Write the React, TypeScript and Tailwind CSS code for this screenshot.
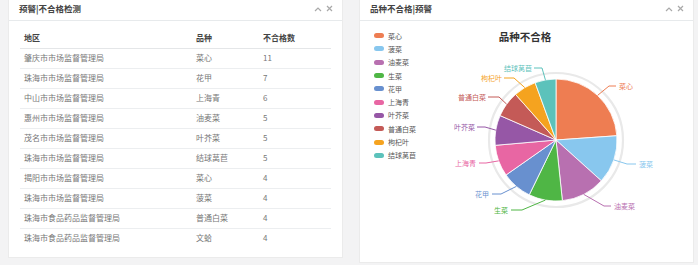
import React from "react";

const FONT = { fontFamily: '"Noto Sans CJK SC", "Noto Sans", sans-serif' };

const rows: [string, string, number][] = [
  ["肇庆市市场监督管理局", "菜心", 11],
  ["珠海市市场监督管理局", "花甲", 7],
  ["中山市市场监督管理局", "上海青", 6],
  ["惠州市市场监督管理局", "油麦菜", 5],
  ["茂名市市场监督管理局", "叶芥菜", 5],
  ["珠海市市场监督管理局", "结球莴苣", 5],
  ["揭阳市市场监督管理局", "菜心", 4],
  ["珠海市市场监督管理局", "菠菜", 4],
  ["珠海市食品药品监督管理局", "普通白菜", 4],
  ["珠海市食品药品监督管理局", "文蛤", 4],
];

type Slice = {
  name: string;
  color: string;
  a0: number;
  a1: number;
  p2: [number, number];
  p3: [number, number];
  tx: number;
  anchor: "start" | "end";
};

const slices: Slice[] = [
  { name: "菜心", color: "#ee7d52", a0: 0, a1: 86, p2: [610, 87], p3: [617, 87], tx: 620, anchor: "start" },
  { name: "菠菜", color: "#88c7ee", a0: 86, a1: 132, p2: [628, 165], p3: [637, 165], tx: 640, anchor: "start" },
  { name: "油麦菜", color: "#b870b0", a0: 132, a1: 174, p2: [605, 207], p3: [612, 207], tx: 615, anchor: "start" },
  { name: "生菜", color: "#4fb645", a0: 174, a1: 206, p2: [523, 211], p3: [512, 211], tx: 509, anchor: "end" },
  { name: "花甲", color: "#6890cf", a0: 206, a1: 235, p2: [502, 195], p3: [493, 195], tx: 490, anchor: "end" },
  { name: "上海青", color: "#e866a3", a0: 235, a1: 265, p2: [487, 164], p3: [480, 164], tx: 477, anchor: "end" },
  { name: "叶芥菜", color: "#9657a6", a0: 265, a1: 293.6, p2: [486, 128], p3: [478, 128], tx: 476, anchor: "end" },
  { name: "普通白菜", color: "#c45a57", a0: 293.6, a1: 318.4, p2: [500, 98], p3: [489, 98], tx: 487, anchor: "end" },
  { name: "枸杞叶", color: "#f5a31f", a0: 318.4, a1: 340, p2: [515, 79], p3: [505, 79], tx: 503, anchor: "end" },
  { name: "结球莴苣", color: "#5cc2bb", a0: 340, a1: 360, p2: [543, 69], p3: [535, 69], tx: 533, anchor: "end" },
];

// svg origin in page coords
const OX = 420;
const OY = 45;
const CX = 557 - OX;
const CY = 141 - OY;
const R = 61;

function pt(a: number, r: number): [number, number] {
  const rad = (a * Math.PI) / 180;
  return [CX + r * Math.sin(rad), CY - r * Math.cos(rad)];
}

function slicePath(a0: number, a1: number) {
  const [x0, y0] = pt(a0, R);
  const [x1, y1] = pt(a1, R);
  const large = a1 - a0 > 180 ? 1 : 0;
  return `M${CX},${CY} L${x0},${y0} A${R},${R} 0 ${large} 1 ${x1},${y1} Z`;
}

function PanelIcons() {
  return (
    <div className="flex items-center gap-[4px]">
      <svg width="8" height="6" viewBox="0 0 8 6">
        <path d="M1 5 L4 2 L7 5" stroke="#a9a9a9" strokeWidth="1.2" fill="none" />
      </svg>
      <svg width="7" height="7" viewBox="0 0 7 7">
        <path d="M1 1 L6 6 M6 1 L1 6" stroke="#a9a9a9" strokeWidth="1.2" fill="none" />
      </svg>
    </div>
  );
}

function PanelHeader({ title }: { title: string }) {
  return (
    <div className="flex h-[21px] items-start justify-between border-b border-[#e7eaec] pl-[10px] pr-[9px] pt-[2px]">
      <span className="text-[8.5px] font-bold leading-[12px] text-[#444]">{title}</span>
      <div className="pt-[3px]">
        <PanelIcons />
      </div>
    </div>
  );
}

export default function App() {
  return (
    <div
      className="flex h-[265px] w-[698px] items-start gap-[16px] bg-[#f3f3f4] pl-[8px]"
      style={FONT}
    >
      {/* Left panel */}
      <div className="h-[258px] w-[335px] border-x border-b border-[#ebebeb] bg-white">
        <PanelHeader title="预警|不合格检测" />
        <div className="px-[11px] pt-[7px]">
          <table className="w-full border-collapse text-[8px]">
            <thead>
              <tr className="h-[20px] border-b border-[#e4e6e8]">
                <th className="w-[172px] pl-[4px] text-left font-bold text-[#444]">地区</th>
                <th className="w-[67px] pl-[4px] text-left font-bold text-[#444]">品种</th>
                <th className="pl-[4px] text-left font-bold text-[#444]">不合格数</th>
              </tr>
            </thead>
            <tbody>
              {rows.map((r, i) => (
                <tr
                  key={i}
                  className={i === 0 ? "h-[20px]" : "h-[20px] border-t border-[#eceef0]"}
                >
                  <td className="pl-[4px] text-[#777]">{r[0]}</td>
                  <td className="pl-[4px] text-[#777]">{r[1]}</td>
                  <td className="pl-[4px] text-[#777]">{r[2]}</td>
                </tr>
              ))}
            </tbody>
          </table>
        </div>
      </div>

      {/* Right panel */}
      <div className="h-[263px] w-[335px] border-x border-b border-[#ebebeb] bg-white">
        <PanelHeader title="品种不合格|预警" />
        <div className="flex h-[241px]">
          <div className="flex w-[61px] flex-col pl-[14px] pt-[8px]">
            {slices.map((s) => (
              <div key={s.name} className="flex h-[13.3px] items-center gap-[4px]">
                <span
                  className="inline-block h-[5px] w-[10px] rounded-[3px]"
                  style={{ backgroundColor: s.color }}
                />
                <span className="whitespace-nowrap text-[7px] leading-[10px] text-[#555]">
                  {s.name}
                </span>
              </div>
            ))}
          </div>
          <div className="flex flex-1 flex-col">
            <div className="mt-[9px] h-[14px] pr-[62px] text-center text-[10.5px] font-bold leading-[14px] text-[#333]">
              品种不合格
            </div>
            <svg width="274" height="218" viewBox="0 0 274 218" className="block">
              <circle cx={CX} cy={CY} r={67} fill="none" stroke="#e9e9e9" strokeWidth="2.2" />
              {slices.map((s) => (
                <path
                  key={s.name}
                  d={slicePath(s.a0, s.a1)}
                  fill={s.color}
                  stroke="#ffffff"
                  strokeWidth="0.8"
                />
              ))}
              {slices.map((s) => {
                const p1 = pt((s.a0 + s.a1) / 2, R);
                const p2 = [s.p2[0] - OX, s.p2[1] - OY];
                const p3 = [s.p3[0] - OX, s.p3[1] - OY];
                return (
                  <g key={s.name}>
                    <polyline
                      points={`${p1[0]},${p1[1]} ${p2[0]},${p2[1]} ${p3[0]},${p3[1]}`}
                      fill="none"
                      stroke={s.color}
                      strokeWidth="1"
                    />
                    <text
                      x={s.tx - OX}
                      y={s.p3[1] - OY}
                      fontSize="7"
                      fill={s.color}
                      textAnchor={s.anchor}
                      dominantBaseline="central"
                      style={FONT}
                    >
                      {s.name}
                    </text>
                  </g>
                );
              })}
            </svg>
          </div>
        </div>
      </div>
    </div>
  );
}
